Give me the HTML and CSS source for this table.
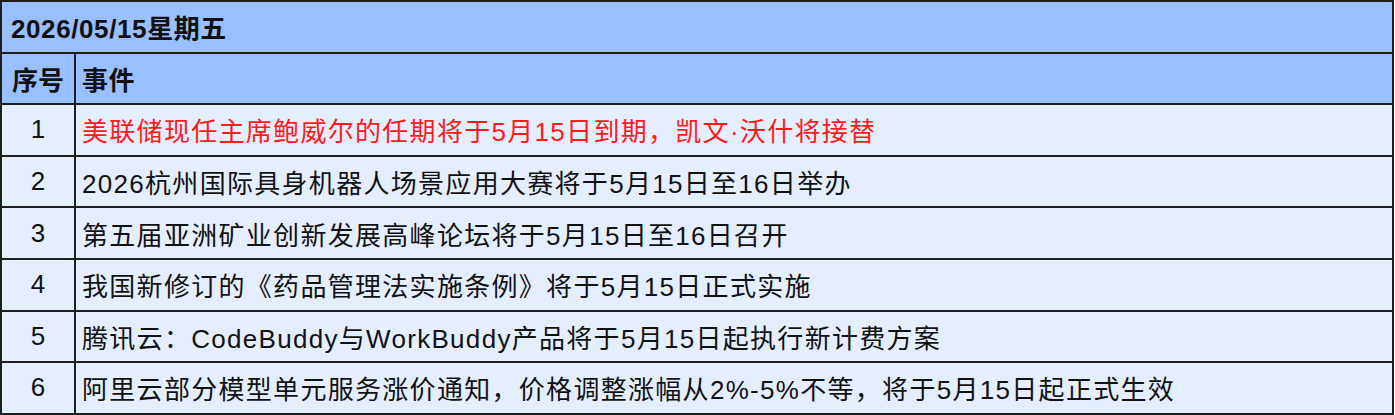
FILE: index.html
```html
<!DOCTYPE html>
<html lang="zh-CN">
<head>
<meta charset="utf-8">
<title>2026/05/15星期五</title>
<link rel="stylesheet" href="styles.css">
</head>
<body>
<table class="events">
  <colgroup>
    <col class="col-no">
    <col class="col-ev">
  </colgroup>
  <thead>
    <tr class="title-row"><th colspan="2" class="title">2026/05/15星期五</th></tr>
    <tr class="head-row"><th class="no">序号</th><th class="ev">事件</th></tr>
  </thead>
  <tbody>
    <tr><td class="no">1</td><td class="ev hot">美联储现任主席鲍威尔的任期将于5月15日到期，凯文·沃什将接替</td></tr>
    <tr><td class="no">2</td><td class="ev">2026杭州国际具身机器人场景应用大赛将于5月15日至16日举办</td></tr>
    <tr><td class="no">3</td><td class="ev">第五届亚洲矿业创新发展高峰论坛将于5月15日至16日召开</td></tr>
    <tr><td class="no">4</td><td class="ev">我国新修订的《药品管理法实施条例》将于5月15日正式实施</td></tr>
    <tr><td class="no">5</td><td class="ev">腾讯云：CodeBuddy与WorkBuddy产品将于5月15日起执行新计费方案</td></tr>
    <tr><td class="no">6</td><td class="ev">阿里云部分模型单元服务涨价通知，价格调整涨幅从2%-5%不等，将于5月15日起正式生效</td></tr>
  </tbody>
</table>
</body>
</html>
```
FILE: styles.css
```css
html, body {
  margin: 0;
  padding: 0;
  background: #ffffff;
}
.events {
  border-collapse: collapse;
  width: 1394px;
  font-family: "Liberation Sans", "Noto Sans CJK SC", sans-serif;
  font-size: 26px;
  letter-spacing: 1.3px;
  color: #111111;
}
.col-no { width: 74px; }
.events th,
.events td {
  border: 2px solid #1e1e1e;
  height: 49.6px;
  padding: 0;
}
.title-row th,
.head-row th {
  background: #99bfff;
  font-weight: bold;
  text-align: left;
}
.title {
  padding-left: 9px !important;
  letter-spacing: 0.6px;
}
.head-row .no {
  text-align: center;
  letter-spacing: 0;
}
.head-row .ev {
  padding-left: 6px;
  letter-spacing: 0.6px;
}
tbody td {
  background: #e5eeff;
}
td.no {
  text-align: center;
  letter-spacing: 0;
}
td.ev {
  padding-left: 6px;
}
.hot {
  color: #ff1a1a;
}
```
